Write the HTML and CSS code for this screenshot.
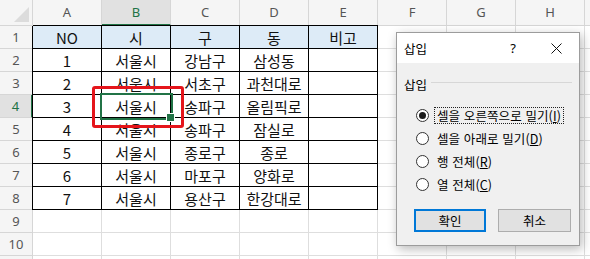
FILE: index.html
```html
<!DOCTYPE html>
<html lang="ko">
<head>
<meta charset="utf-8">
<title>삽입</title>
<link rel="stylesheet" href="styles.css">
</head>
<body>
<div class="sheet">
  <div class="h corner"><span class="tri"></span></div>
  <div class="h">A</div><div class="h sel-col">B</div><div class="h">C</div><div class="h">D</div><div class="h">E</div><div class="h">F</div><div class="h">G</div><div class="h">H</div><div class="h"></div>

  <div class="h rh">1</div>
  <div class="c t th tl tt">NO</div><div class="c t th tt">시</div><div class="c t th tt">구</div><div class="c t th tt">동</div><div class="c t th tt">비고</div><div class="c"></div><div class="c"></div><div class="c"></div><div class="c"></div>

  <div class="h rh">2</div>
  <div class="c t tl">1</div><div class="c t">서울시</div><div class="c t">강남구</div><div class="c t">삼성동</div><div class="c t"></div><div class="c"></div><div class="c"></div><div class="c"></div><div class="c"></div>

  <div class="h rh">3</div>
  <div class="c t tl">2</div><div class="c t">서울시</div><div class="c t">서초구</div><div class="c t">과천대로</div><div class="c t"></div><div class="c"></div><div class="c"></div><div class="c"></div><div class="c"></div>

  <div class="h rh sel-row">4</div>
  <div class="c t tl">3</div><div class="c t active">서울시</div><div class="c t">송파구</div><div class="c t">올림픽로</div><div class="c t"></div><div class="c"></div><div class="c"></div><div class="c"></div><div class="c"></div>

  <div class="h rh">5</div>
  <div class="c t tl">4</div><div class="c t">서울시</div><div class="c t">송파구</div><div class="c t">잠실로</div><div class="c t"></div><div class="c"></div><div class="c"></div><div class="c"></div><div class="c"></div>

  <div class="h rh">6</div>
  <div class="c t tl">5</div><div class="c t">서울시</div><div class="c t">종로구</div><div class="c t">종로</div><div class="c t"></div><div class="c"></div><div class="c"></div><div class="c"></div><div class="c"></div>

  <div class="h rh">7</div>
  <div class="c t tl">6</div><div class="c t">서울시</div><div class="c t">마포구</div><div class="c t">양화로</div><div class="c t"></div><div class="c"></div><div class="c"></div><div class="c"></div><div class="c"></div>

  <div class="h rh">8</div>
  <div class="c t tl">7</div><div class="c t">서울시</div><div class="c t">용산구</div><div class="c t">한강대로</div><div class="c t"></div><div class="c"></div><div class="c"></div><div class="c"></div><div class="c"></div>

  <div class="h rh">9</div>
  <div class="c"></div><div class="c"></div><div class="c"></div><div class="c"></div><div class="c"></div><div class="c"></div><div class="c"></div><div class="c"></div><div class="c"></div>

  <div class="h rh">10</div>
  <div class="c"></div><div class="c"></div><div class="c"></div><div class="c"></div><div class="c"></div><div class="c"></div><div class="c"></div><div class="c"></div><div class="c"></div>

  <div class="h rh"></div>
  <div class="c"></div><div class="c"></div><div class="c"></div><div class="c"></div><div class="c"></div><div class="c"></div><div class="c"></div><div class="c"></div><div class="c"></div>
</div>

<div class="callout"></div>

<div class="dialog">
  <div class="titlebar">
    <span class="title">삽입</span>
    <span class="help">?</span>
    <svg class="close" width="11" height="11" viewBox="0 0 11 11"><path d="M0.5 0.5 L10.5 10.5 M10.5 0.5 L0.5 10.5" stroke="#111" stroke-width="1" fill="none"/></svg>
  </div>
  <div class="body">
    <div class="group-label"><span>삽입</span><span class="rule"></span></div>
    <div class="options">
      <div class="opt"><span class="radio checked"></span><span class="lbl focus">셀을 오른쪽으로 밀기(<u>I</u>)</span></div>
      <div class="opt"><span class="radio"></span><span class="lbl">셀을 아래로 밀기(<u>D</u>)</span></div>
      <div class="opt"><span class="radio"></span><span class="lbl">행 전체(<u>R</u>)</span></div>
      <div class="opt"><span class="radio"></span><span class="lbl">열 전체(<u>C</u>)</span></div>
    </div>
    <div class="buttons">
      <div class="btn default">확인</div>
      <div class="btn">취소</div>
    </div>
  </div>
</div>
</body>
</html>
```
FILE: styles.css
```css
* { box-sizing: border-box; }
html, body { margin: 0; padding: 0; background: #fff; }
body {
  width: 590px;
  height: 259px;
  overflow: hidden;
  position: relative;
  font-family: "Noto Sans CJK KR", "Noto Sans", sans-serif;
  color: #000;
}

.sheet {
  display: grid;
  grid-template-columns: 33px repeat(9, 69px);
  grid-template-rows: 26px repeat(11, 23px);
  width: 590px;
  height: 259px;
  overflow: hidden;
}

.h {
  background: #f5f5f5;
  border-right: 1px solid #d6d6d6;
  border-bottom: 1px solid #d6d6d6;
  display: flex;
  align-items: center;
  justify-content: center;
  font-family: "Noto Sans", "Open Sans", sans-serif;
  font-size: 13px;
  color: #555;
  line-height: 1;
}
.corner { position: relative; }
.tri {
  position: absolute;
  right: 3px;
  bottom: 3px;
  width: 0;
  height: 0;
  border-left: 15px solid transparent;
  border-bottom: 15px solid #dcdcdc;
}
.sel-col {
  background: #e1e1e1;
  color: #217346;
  border-bottom: 2px solid #217346;
}
.rh { padding-top: 1px; }
.sel-row {
  background: #e1e1e1;
  color: #217346;
  border-right: 2px solid #217346;
}

.c {
  border-right: 1px solid #dedede;
  border-bottom: 1px solid #dedede;
  display: flex;
  align-items: center;
  justify-content: center;
  font-size: 15px;
  line-height: 1;
  padding-top: 1px;
  color: #111;
  background: #fff;
}
.t {
  border-right-color: #000;
  border-bottom-color: #000;
}
.th { background: #ddebf7; }
.tl { box-shadow: -1px 0 0 #000; }
.tt { box-shadow: 0 -1px 0 #000; }
.tl.tt { box-shadow: -1px 0 0 #000, 0 -1px 0 #000, -1px -1px 0 #000; }

.active {
  position: relative;
  z-index: 1;
  outline: 2px solid #217346;
}
.active::after {
  content: "";
  position: absolute;
  right: -5px;
  bottom: -5px;
  width: 7px;
  height: 7px;
  background: #217346;
  border: 1px solid #fff;
}

.callout {
  position: absolute;
  left: 92px;
  top: 86px;
  width: 92px;
  height: 42px;
  border: 3px solid #e5151b;
  border-radius: 3px;
  z-index: 2;
}

.dialog {
  position: absolute;
  left: 396px;
  top: 32px;
  width: 184px;
  height: 214px;
  border: 1px solid #9c9c9c;
  background: #f0f0f0;
  box-shadow: 2px 3px 10px rgba(0, 0, 0, 0.28);
  display: flex;
  flex-direction: column;
  font-size: 12px;
  z-index: 3;
}
.titlebar {
  height: 30px;
  background: #fff;
  display: flex;
  align-items: center;
  padding: 0 0 0 7px;
}
.title { flex: 1; font-size: 12.5px; }
.help { width: 14px; text-align: center; font-family: "Noto Sans", sans-serif; font-size: 13px; margin-right: 31px; }
.close { margin-right: 17px; }

.body {
  padding: 14px 7px 0 7px;
  display: flex;
  flex-direction: column;
}
.group-label {
  display: flex;
  align-items: center;
  height: 16px;
  line-height: 16px;
  font-size: 12.5px;
}
.rule {
  flex: 1;
  height: 1px;
  background: #d7d7d7;
  margin-left: 4px;
  margin-top: -5px;
}
.options {
  margin-top: 11px;
  padding-left: 12px;
  display: flex;
  flex-direction: column;
}
.opt {
  height: 23px;
  display: flex;
  align-items: center;
}
.radio {
  width: 13px;
  height: 13px;
  border-radius: 50%;
  border: 1px solid #333;
  background: #fff;
  flex: none;
  display: flex;
  align-items: center;
  justify-content: center;
}
.radio.checked::after {
  content: "";
  width: 7px;
  height: 7px;
  border-radius: 50%;
  background: #1a1a1a;
}
.lbl {
  margin-left: 5px;
  padding: 0 2px;
  border: 1px dotted transparent;
  line-height: 15px;
  font-size: 12.5px;
  letter-spacing: 0.1px;
}
.lbl.focus { border-color: #222; }
.lbl u { text-underline-offset: 1px; }

.buttons {
  display: flex;
  gap: 12px;
  margin-top: 13px;
  padding-left: 10px;
}
.btn {
  width: 72px;
  height: 23px;
  background: #e1e1e1;
  border: 1px solid #adadad;
  display: flex;
  align-items: center;
  justify-content: center;
  font-size: 12.5px;
}
.btn + .btn { width: 73px; }
.btn.default { border: 2px solid #0078d7; }
```
